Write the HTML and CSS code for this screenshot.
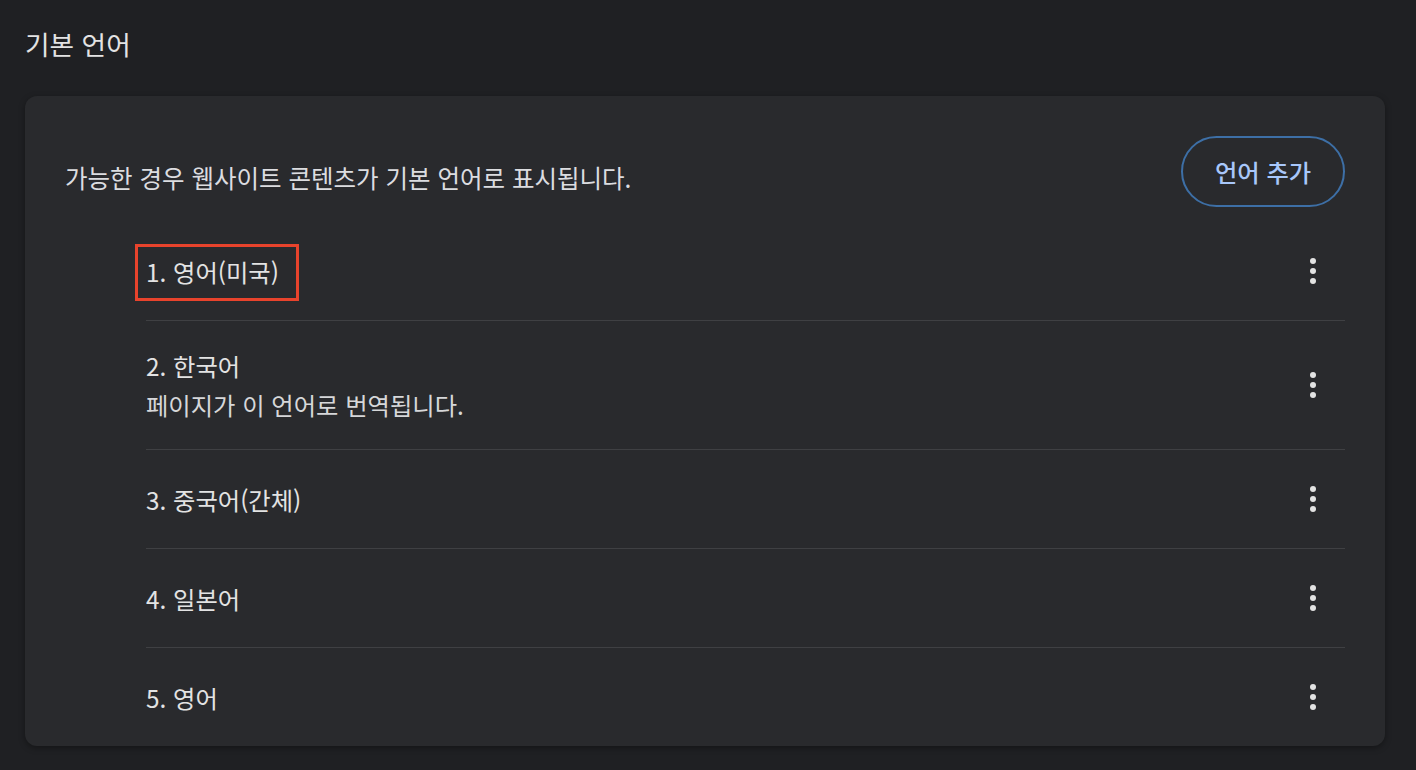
FILE: index.html
```html
<!DOCTYPE html>
<html lang="ko">
<head>
<meta charset="utf-8">
<title>기본 언어</title>
<link rel="stylesheet" href="styles.css">
</head>
<body>
<div class="page">
  <h1 class="title">기본 언어</h1>
  <section class="card">
    <div class="card-head">
      <p class="desc">가능한 경우 웹사이트 콘텐츠가 기본 언어로 표시됩니다.</p>
      <button class="add-btn">언어 추가</button>
    </div>
    <ul class="lang-list">
      <li class="lang-row">
        <div class="lang-text"><span class="lang-name highlight">1. 영어(미국)</span></div>
        <button class="more" aria-label="더보기"><span></span><span></span><span></span></button>
      </li>
      <li class="lang-row">
        <div class="lang-text">
          <span class="lang-name">2. 한국어</span>
          <span class="lang-sub">페이지가 이 언어로 번역됩니다.</span>
        </div>
        <button class="more" aria-label="더보기"><span></span><span></span><span></span></button>
      </li>
      <li class="lang-row">
        <div class="lang-text"><span class="lang-name">3. 중국어(간체)</span></div>
        <button class="more" aria-label="더보기"><span></span><span></span><span></span></button>
      </li>
      <li class="lang-row">
        <div class="lang-text"><span class="lang-name">4. 일본어</span></div>
        <button class="more" aria-label="더보기"><span></span><span></span><span></span></button>
      </li>
      <li class="lang-row">
        <div class="lang-text"><span class="lang-name">5. 영어</span></div>
        <button class="more" aria-label="더보기"><span></span><span></span><span></span></button>
      </li>
    </ul>
  </section>
</div>
</body>
</html>
```
FILE: styles.css
```css
* { box-sizing: border-box; }
html, body {
  margin: 0;
  padding: 0;
  background: #1f2023;
  height: 100%;
}
body {
  font-family: "Noto Sans CJK KR", "Noto Sans", sans-serif;
  color: #e3e3e3;
}
.page {
  padding: 25px 31px 0 25px;
}
.title {
  margin: 0;
  font-size: 26.7px;
  font-weight: 400;
  line-height: 38px;
  color: #e3e3e3;
}
.card {
  margin-top: 33px;
  background: #292a2d;
  border-radius: 12px;
  box-shadow: 0 2px 6px rgba(0,0,0,0.35);
  padding: 40px 40px 0 40px;
}
.card-head {
  display: flex;
  align-items: center;
  justify-content: space-between;
  padding-bottom: 15px;
}
.desc {
  margin: 13px 0 0 0;
  font-size: 24.5px;
  line-height: 34px;
  color: #dcdde0;
}
.add-btn {
  height: 71px;
  width: 164px;
  border-radius: 36px;
  border: 2px solid #3d6fa6;
  background: transparent;
  color: #a8c7fa;
  font-family: inherit;
  font-size: 24.3px;
  font-weight: 500;
  padding: 0;
}
.lang-list {
  list-style: none;
  margin: 0 0 0 81px;
  padding: 0;
}
.lang-row {
  display: flex;
  align-items: center;
  justify-content: space-between;
  min-height: 98px;
  padding: 25px 0;
  border-top: 1px solid #3f4043;
}
.lang-row:first-child {
  border-top: none;
}
.lang-text {
  display: flex;
  flex-direction: column;
}
.lang-name, .lang-sub {
  font-size: 24.3px;
  line-height: 39px;
  color: #e3e3e3;
}
.lang-sub {
  color: #d6d7d9;
}
.highlight {
  position: relative;
}
.highlight::after {
  content: "";
  position: absolute;
  left: -11px;
  right: -20px;
  top: -8px;
  bottom: -10px;
  border: 3px solid #e8432c;
}
.more {
  width: 64px;
  height: 48px;
  background: transparent;
  border: none;
  padding: 0;
  display: flex;
  flex-direction: column;
  align-items: center;
  justify-content: center;
  gap: 4px;
}
.more span {
  width: 6px;
  height: 6px;
  border-radius: 50%;
  background: #e3e3e3;
}
```
